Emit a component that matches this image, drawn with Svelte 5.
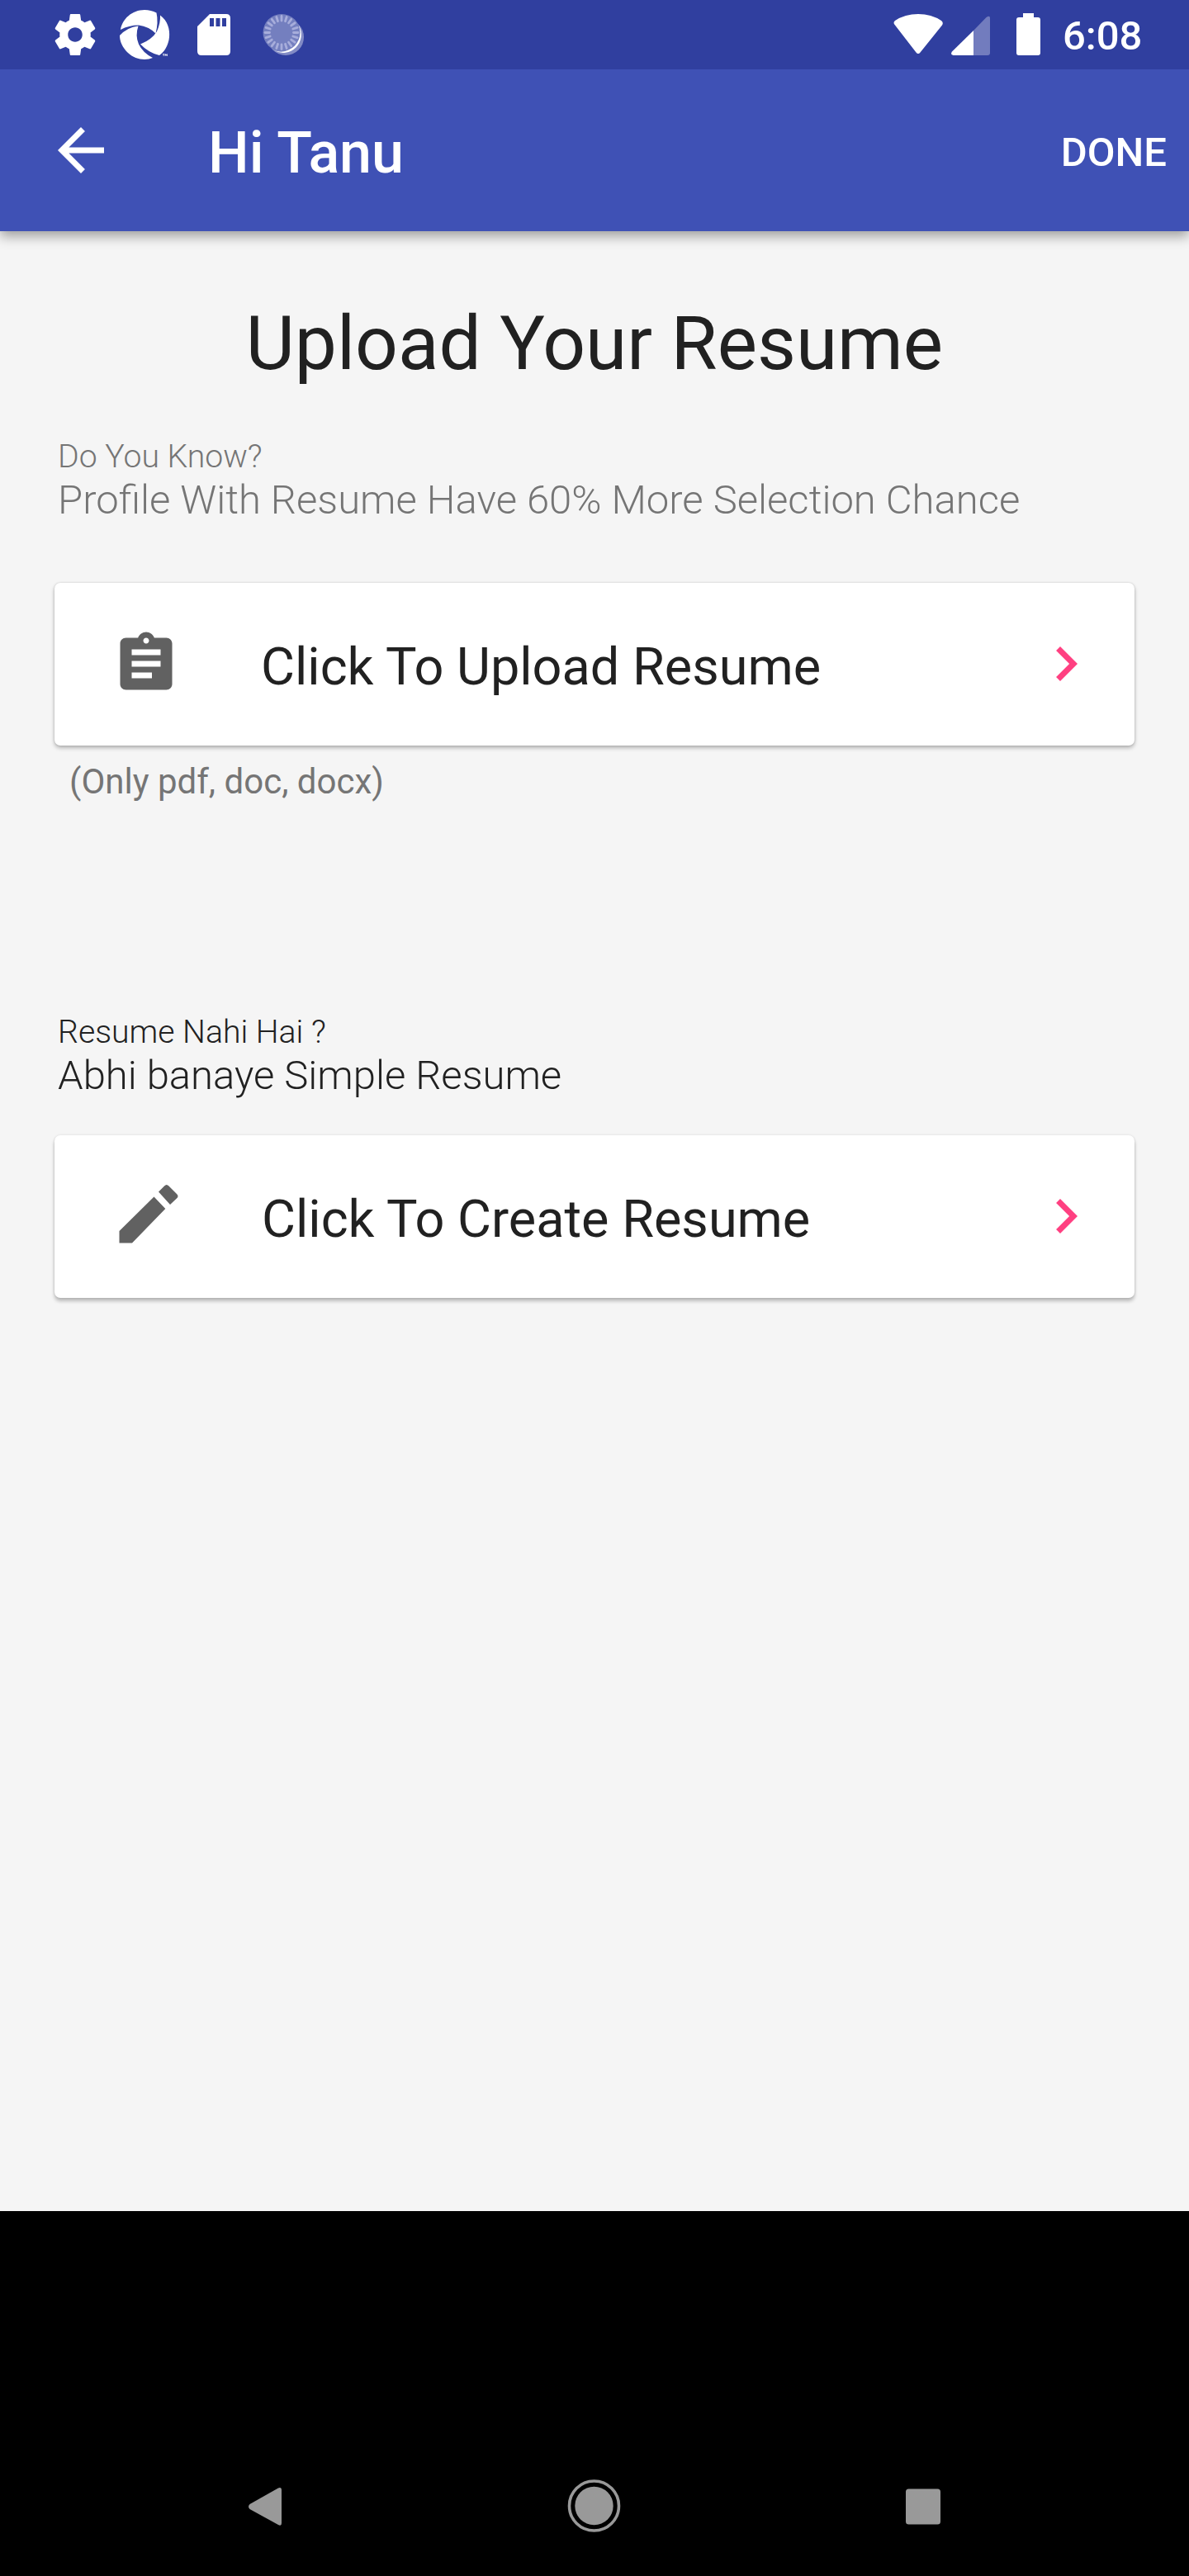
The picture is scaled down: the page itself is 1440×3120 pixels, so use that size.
<script>
  const rays = Array.from({ length: 20 }, (_, i) => i * 18);
</script>

<div class="screen">
  <div class="status">
    <svg class="status-left" width="340" height="84" viewBox="40 0 340 84">
      <g fill="#fff">
        <path transform="translate(61 12) scale(2.5)" d="M19.43 12.98c.04-.32.07-.64.07-.98s-.03-.66-.07-.98l2.11-1.65c.19-.15.24-.42.12-.64l-2-3.46c-.12-.22-.39-.3-.61-.22l-2.49 1c-.52-.4-1.08-.73-1.69-.98l-.38-2.65C14.46 2.18 14.25 2 14 2h-4c-.25 0-.46.18-.49.42l-.38 2.65c-.61.25-1.17.59-1.69.98l-2.49-1c-.23-.09-.49 0-.61.22l-2 3.46c-.13.22-.07.49.12.64l2.11 1.65c-.04.32-.07.65-.07.98s.03.66.07.98l-2.11 1.65c-.19.15-.24.42-.12.64l2 3.46c.12.22.39.3.61.22l2.49-1c.52.4 1.08.73 1.69.98l.38 2.65c.03.24.24.42.49.42h4c.25 0 .46-.18.49-.42l.38-2.65c.61-.25 1.17-.59 1.69-.98l2.49 1c.23.09.49 0 .61-.22l2-3.46c.12-.22.07-.49-.12-.64l-2.11-1.65zM12 15.5c-1.93 0-3.5-1.57-3.5-3.5s1.57-3.5 3.5-3.5 3.5 1.57 3.5 3.5-1.57 3.5-3.5 3.5z" />
        <path d="M146 36C148 23 160 12 175 12Q183 12 189.5 15.500Q192 27 188.500 40.500Q180 32 168 30.500Q156 30.500 146 36Z" />
        <path d="M194 18.500C203 25 206 36 205 45C204 55 199 63 193 67Q180 64 170 53.500Q184 48 190 38Q194.500 28 194 18.500Z" />
        <path d="M185 70C176 74 163 72 155 64C148 57 145 50 145 43Q154 33 167.500 31.500Q163.500 43 168 53.500Q173 64 185 70Z" />
        <path d="M197 65.200h2.300v.8h-.8v2h-.8v-2h-.7zM199.700 65.200h.8l.7 1.200.7-1.200h.8v2.800h-.7v-1.500l-.8 1.200-.8-1.200v1.500h-.7z" />
        <path fill-rule="evenodd" d="M254 17H274Q279 17 279 22V62Q279 67 274 67H244Q239 67 239 62V32ZM254 22v10h5V22zM261.500 22v10h5V22zM269 22v10h5V22z" />
        <circle cx="346" cy="45" r="22" opacity=".4" />
        <path d="M362 31A22 22 0 0 1 332 61Q345 66 355 56Q364 47 362 31Z" />
        <circle cx="341" cy="39.500" r="22.500" fill="#747fbf" />
      </g>
      <g stroke="#a7addb" stroke-width="2.800" stroke-linecap="round">
        {#each rays as angle}
          <line x1="341" y1="19.500" x2="341" y2="25" transform="rotate({angle} 341 39.500)" />
        {/each}
      </g>
    </svg>
    <div class="status-right">
      <svg width="200" height="84" viewBox="1070 0 200 84" fill="#fff">
        <path d="M1084 30.500Q1081 27.500 1084 25Q1096 17 1112 17Q1128 17 1140 25Q1143 27.500 1141 30.500L1114.500 63.500Q1112 66.500 1109.500 63.500Z" />
        <path opacity=".32" d="M1179 37L1194.500 21Q1199 18 1199 22V64Q1199 67 1196 67H1179Z" />
        <path d="M1179 37V67H1154.500Q1150.500 66 1153 62.500Z" />
        <path d="M1239 16h13v5h5q3 0 3 3v40q0 3-3 3h-23q-3 0-3-3v-40q0-3 3-3h5z" />
      </svg>
      <span class="clock">6:08</span>
    </div>
  </div>

  <header class="appbar">
    <svg class="back" viewBox="0 0 24 24" fill="#fff"><path d="M20 11H7.830l5.590-5.590L12 4l-8 8 8 8 1.410-1.410L7.830 13H20v-2z" /></svg>
    <h1>Hi Tanu</h1>
    <span class="done">DONE</span>
  </header>

  <main>
    <h2>Upload Your Resume</h2>
    <div class="hint">
      <p class="small">Do You Know?</p>
      <p class="large">Profile With Resume Have 60% More Selection Chance</p>
    </div>
    <div class="card">
      <svg class="lead" viewBox="0 0 24 24" fill="#616161"><path d="M19 3h-4.180C14.400 1.840 13.300 1 12 1c-1.300 0-2.400.84-2.820 2H5c-1.100 0-2 .9-2 2v14c0 1.100.9 2 2 2h14c1.100 0 2-.9 2-2V5c0-1.100-.9-2-2-2zm-7 0c.55 0 1 .45 1 1s-.45 1-1 1-1-.45-1-1 .45-1 1-1zm2 14H7v-2h7v2zm3-4H7v-2h10v2zm0-4H7V7h10v2z" /></svg>
      <span class="label">Click To Upload Resume</span>
      <svg class="chevron" viewBox="0 0 24 24" fill="#ff4081"><path d="M10 6L8.590 7.410 13.170 12l-4.580 4.590L10 18l6-6z" /></svg>
    </div>
    <p class="note">(Only pdf, doc, docx)</p>

    <div class="hint dark">
      <p class="small">Resume Nahi Hai ?</p>
      <p class="large">Abhi banaye Simple Resume</p>
    </div>
    <div class="card low">
      <svg class="lead" viewBox="0 0 84 84" fill="#616161"><path d="M9.500 74.500V60L51.500 18.500L65.300 33L25 74.500ZM57 12.500L64 5.500Q66.700 2.500 69.500 5.500L79 15Q82 17.800 79 20.500L71 28Z" /></svg>
      <span class="label create">Click To Create Resume</span>
      <svg class="chevron" viewBox="0 0 24 24" fill="#ff4081"><path d="M10 6L8.590 7.410 13.170 12l-4.580 4.590L10 18l6-6z" /></svg>
    </div>
  </main>

  <footer>
    <svg width="900" height="90" viewBox="270 2990 900 90" fill="#999">
      <path d="M302.500 3033L337 3013.500Q341 3012 341 3016V3056Q341 3060 337 3058L302.500 3039Q299.500 3036 302.500 3033Z" />
      <circle cx="719.500" cy="3035" r="23.200" />
      <circle cx="719.500" cy="3035" r="30" fill="none" stroke="#999" stroke-width="3.600" />
      <rect x="1097" y="3014.500" width="42" height="43" rx="3.500" />
    </svg>
  </footer>
</div>

<style>
  :global(body) {
    margin: 0;
    background: #000;
  }
  .screen {
    width: 1440px;
    height: 3120px;
    display: flex;
    flex-direction: column;
    font-family: Roboto, "Liberation Sans", sans-serif;
    color: #212121;
    overflow: hidden;
  }
  h1, h2, p {
    margin: 0;
  }
  svg {
    display: block;
    flex: none;
  }
  .status {
    height: 84px;
    flex: none;
    display: flex;
    justify-content: space-between;
    padding-left: 40px;
    background: #303f9f;
  }
  .status-right {
    display: flex;
    color: #fff;
  }
  .clock {
    width: 170px;
    box-sizing: border-box;
    padding-left: 17px;
    font-size: 49px;
    font-weight: 500;
    line-height: 88px;
  }
  .appbar {
    height: 196px;
    flex: none;
    box-sizing: border-box;
    display: flex;
    align-items: center;
    padding: 0 27px 0 56px;
    background: #3f51b5;
    color: #fff;
    box-shadow: 0 6px 14px rgba(0, 0, 0, 0.36);
    clip-path: inset(0 0 -40px 0);
    z-index: 1;
  }
  .back {
    width: 84px;
    height: 84px;
  }
  h1 {
    margin-left: 112px;
    flex: 1;
    font-size: 70px;
    font-weight: 500;
    line-height: 82px;
    padding-top: 6px;
  }
  .done {
    font-size: 49px;
    font-weight: 500;
    padding-top: 4px;
  }
  main {
    height: 2398px;
    flex: none;
    box-sizing: border-box;
    padding: 82px 66px 0;
    background: #f5f5f5;
  }
  h2 {
    font-size: 91px;
    font-weight: 400;
    line-height: 108px;
    text-align: center;
  }
  .hint {
    margin-top: 60px;
    padding-left: 4px;
    font-weight: 300;
    color: #757575;
  }
  .small {
    font-size: 39.2px;
    line-height: 46px;
  }
  .large {
    margin-top: 1px;
    font-size: 49px;
    line-height: 58px;
  }
  .card {
    margin-top: 71px;
    height: 197px;
    box-sizing: border-box;
    display: flex;
    align-items: center;
    padding: 0 41px 0 69px;
    border-radius: 7px;
    background: #fff;
    box-shadow: 0 3px 5px rgba(0, 0, 0, 0.26), 0 0 3px rgba(0, 0, 0, 0.14);
  }
  .lead, .chevron {
    width: 84px;
    height: 84px;
    margin-bottom: 1px;
  }
  .label {
    flex: 1;
    margin-left: 97px;
    padding-top: 6px;
    font-size: 63px;
    line-height: 74px;
  }
  .create {
    margin-left: 98px;
  }
  .note {
    margin-top: 19px;
    padding-left: 18px;
    font-size: 42px;
    line-height: 50px;
    color: #757575;
  }
  .dark {
    margin-top: 255px;
    color: #212121;
  }
  .low {
    margin-top: 43px;
    box-shadow: 0 4px 4px rgba(0, 0, 0, 0.24), 0 0 3px rgba(0, 0, 0, 0.12);
  }
  footer {
    flex: 1;
    display: flex;
    flex-direction: column;
    align-items: center;
    justify-content: flex-end;
    padding-bottom: 40px;
    background: #000;
  }
</style>
